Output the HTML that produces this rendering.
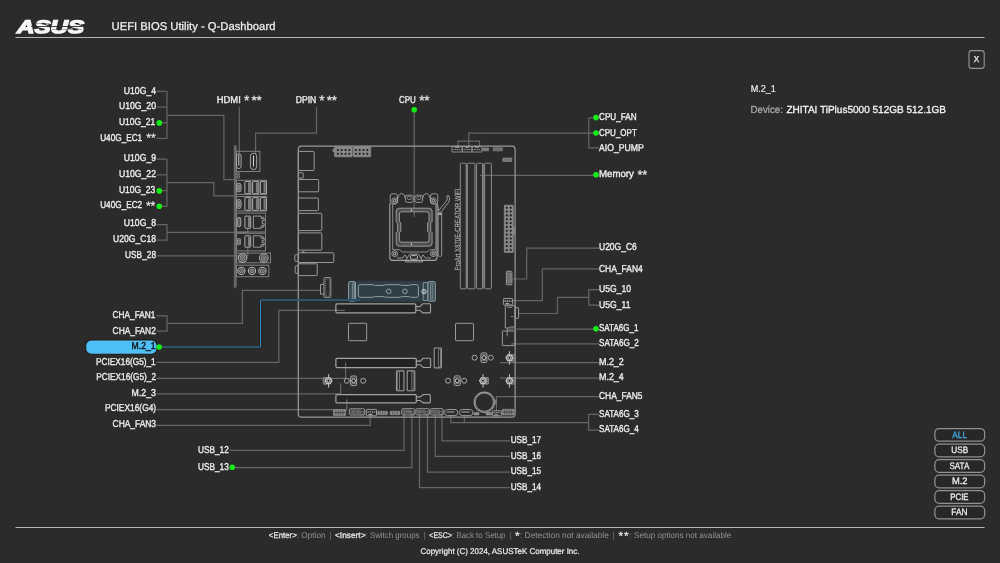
<!DOCTYPE html>
<html lang="en"><head><meta charset="utf-8"><title>UEFI BIOS Utility - Q-Dashboard</title>
<style>html,body{margin:0;padding:0;background:#2b2b2b;overflow:hidden}svg{display:block;will-change:transform;font-family:"Liberation Sans", sans-serif}text{white-space:pre;text-rendering:geometricPrecision}</style>
</head><body>
<svg width="1000" height="563" viewBox="0 0 1000 563">
<rect width="1000" height="563" fill="#2b2b2b"/>
<g id="fills">
<rect x="335.9" y="303.8" width="79.9" height="9.1" rx="1.2" fill="#232323" stroke="none" stroke-width="0" />
<rect x="335.9" y="358.3" width="80.4" height="9.2" rx="1.2" fill="#232323" stroke="none" stroke-width="0" />
<rect x="335.9" y="394.5" width="80.4" height="8.4" rx="1.2" fill="#232323" stroke="none" stroke-width="0" />
</g>
<g id="connectors" transform="translate(0,0.3)">
<polyline points="156.5,91.0 167.0,91.0" fill="none" stroke="#666666" stroke-width="1.2" />
<polyline points="156.5,106.7 167.0,106.7" fill="none" stroke="#666666" stroke-width="1.2" />
<polyline points="156.5,138.1 167.0,138.1" fill="none" stroke="#666666" stroke-width="1.2" />
<polyline points="162.0,122.4 167.0,122.4" fill="none" stroke="#666666" stroke-width="1.2" />
<polyline points="167.0,91.0 167.0,138.1" fill="none" stroke="#666666" stroke-width="1.2" />
<polyline points="167.0,115.0 223.9,115.0 223.9,179.4 236.0,179.4" fill="none" stroke="#666666" stroke-width="1.2" />
<polyline points="156.5,158.9 167.0,158.9" fill="none" stroke="#666666" stroke-width="1.2" />
<polyline points="156.5,174.6 167.0,174.6" fill="none" stroke="#666666" stroke-width="1.2" />
<polyline points="162.0,190.3 167.0,190.3" fill="none" stroke="#666666" stroke-width="1.2" />
<polyline points="162.0,206.0 167.0,206.0" fill="none" stroke="#666666" stroke-width="1.2" />
<polyline points="167.0,158.9 167.0,206.0" fill="none" stroke="#666666" stroke-width="1.2" />
<polyline points="167.0,182.3 213.8,182.3 213.8,195.6 234.4,195.6" fill="none" stroke="#666666" stroke-width="1.2" />
<polyline points="156.5,224.3 167.0,224.3 167.0,239.9 156.5,239.9" fill="none" stroke="#666666" stroke-width="1.2" />
<polyline points="167.0,232.1 247.8,232.1 247.8,228.6" fill="none" stroke="#666666" stroke-width="1.2" />
<polyline points="156.5,255.5 247.8,255.5 247.8,247.2" fill="none" stroke="#666666" stroke-width="1.2" />
<polyline points="156.5,315.5 167.0,315.5 167.0,330.8 156.5,330.8" fill="none" stroke="#666666" stroke-width="1.2" />
<polyline points="167.0,323.1 242.4,323.1 242.4,290.0 320.5,290.0" fill="none" stroke="#666666" stroke-width="1.2" />
<polyline points="156.5,362.0 278.8,362.0 278.8,310.0 345.0,310.0" fill="none" stroke="#666666" stroke-width="1.2" />
<polyline points="156.5,378.0 345.6,378.0 345.6,362.3" fill="none" stroke="#666666" stroke-width="1.2" />
<polyline points="156.5,393.5 340.7,393.5 340.7,383.0" fill="none" stroke="#666666" stroke-width="1.2" />
<polyline points="156.5,409.3 346.8,409.3 346.8,399.0" fill="none" stroke="#666666" stroke-width="1.2" />
<polyline points="156.5,425.0 370.2,425.0 370.2,415.5" fill="none" stroke="#666666" stroke-width="1.2" />
<polyline points="229.5,450.0 404.0,450.0 404.0,413.0" fill="none" stroke="#666666" stroke-width="1.2" />
<polyline points="235.0,467.3 411.9,467.3 411.9,413.0" fill="none" stroke="#666666" stroke-width="1.2" />
<polyline points="239.3,107.0 239.3,154.0" fill="none" stroke="#666666" stroke-width="1.2" />
<polyline points="316.5,107.0 316.5,132.8 255.6,132.8 255.6,153.0" fill="none" stroke="#666666" stroke-width="1.2" />
<polyline points="414.2,112.0 414.2,216.8" fill="none" stroke="#666666" stroke-width="1.2" />
<polyline points="594.0,117.6 588.8,117.6 588.8,147.6 599.0,147.6" fill="none" stroke="#666666" stroke-width="1.2" />
<polyline points="468.8,146.5 468.8,132.8 594.0,132.8" fill="none" stroke="#666666" stroke-width="1.2" />
<polyline points="458.0,146.5 458.0,140.9 479.5,140.9 479.5,146.5" fill="none" stroke="#666666" stroke-width="1.2" />
<polyline points="479.9,175.0 594.0,175.0" fill="none" stroke="#666666" stroke-width="1.2" />
<polyline points="512.2,278.7 526.7,278.7 526.7,247.8 599.0,247.8" fill="none" stroke="#666666" stroke-width="1.2" />
<polyline points="512.6,300.3 542.3,300.3 542.3,268.6 599.0,268.6" fill="none" stroke="#666666" stroke-width="1.2" />
<polyline points="518.7,313.2 557.5,313.2 557.5,297.1 588.8,297.1" fill="none" stroke="#666666" stroke-width="1.2" />
<polyline points="599.0,289.4 588.8,289.4 588.8,304.8 599.0,304.8" fill="none" stroke="#666666" stroke-width="1.2" />
<polyline points="507.6,328.8 594.0,328.8" fill="none" stroke="#666666" stroke-width="1.2" />
<polyline points="511.2,343.5 599.0,343.5" fill="none" stroke="#666666" stroke-width="1.2" />
<polyline points="500.0,362.3 599.0,362.3" fill="none" stroke="#666666" stroke-width="1.2" />
<polyline points="500.0,377.8 599.0,377.8" fill="none" stroke="#666666" stroke-width="1.2" />
<polyline points="496.4,411.0 496.4,396.3 599.0,396.3" fill="none" stroke="#666666" stroke-width="1.2" />
<polyline points="450.8,415.0 450.8,422.3 588.6,422.3" fill="none" stroke="#666666" stroke-width="1.2" />
<polyline points="464.3,415.0 464.3,422.3" fill="none" stroke="#666666" stroke-width="1.2" />
<polyline points="599.0,414.0 588.6,414.0 588.6,429.8 599.0,429.8" fill="none" stroke="#666666" stroke-width="1.2" />
<polyline points="442.0,413.0 442.0,440.5 510.0,440.5" fill="none" stroke="#666666" stroke-width="1.2" />
<polyline points="435.2,413.0 435.2,456.1 510.0,456.1" fill="none" stroke="#666666" stroke-width="1.2" />
<polyline points="427.5,413.0 427.5,471.8 510.0,471.8" fill="none" stroke="#666666" stroke-width="1.2" />
<polyline points="419.5,413.0 419.5,487.4 510.0,487.4" fill="none" stroke="#666666" stroke-width="1.2" />
</g>
<g id="board">
<rect x="234.3" y="145.6" width="1.9" height="141.9" rx="0.9" fill="#626262" stroke="#7c7c7c" stroke-width="0.7" />
<rect x="236.4" y="151.3" width="23.5" height="20.2" rx="0" fill="none" stroke="#808080" stroke-width="1" />
<rect x="236.5" y="153.8" width="4.6" height="14.8" rx="2.3" fill="none" stroke="#a8a8a8" stroke-width="1" />
<polyline points="238.8,155.0 238.8,165.6" fill="none" stroke="#d0d0d0" stroke-width="1" />
<rect x="250.4" y="153.2" width="6.3" height="16.3" rx="3" fill="none" stroke="#a8a8a8" stroke-width="1" />
<polyline points="253.5,155.6 253.5,166.6" fill="none" stroke="#d0d0d0" stroke-width="1.1" />
<circle cx="238.3" cy="173.9" r="1.3" fill="none" stroke="#9a9a9a" stroke-width="0.8"/>
<circle cx="238.3" cy="177.0" r="1.3" fill="none" stroke="#9a9a9a" stroke-width="0.8"/>
<rect x="236.5" y="180.3" width="30.0" height="14.1" rx="0" fill="none" stroke="#808080" stroke-width="1" />
<rect x="236.6" y="183.2" width="4.4" height="8.7" rx="2.1" fill="#4c4c4c" stroke="#a8a8a8" stroke-width="1" />
<rect x="237.9" y="184.7" width="1.8" height="5.7" rx="0.9" fill="#7a7a7a" stroke="#9a9a9a" stroke-width="0.6" />
<rect x="244.9" y="181.4" width="6.0" height="12.3" rx="0.6" fill="none" stroke="#b0b0b0" stroke-width="1" />
<rect x="248.0" y="182.4" width="2.2" height="10.3" rx="0" fill="#7c7c7c" stroke="none" stroke-width="0" />
<rect x="252.7" y="181.4" width="6.1" height="12.3" rx="0.6" fill="none" stroke="#b0b0b0" stroke-width="1" />
<rect x="255.9" y="182.4" width="2.2" height="10.3" rx="0" fill="#7c7c7c" stroke="none" stroke-width="0" />
<rect x="260.4" y="181.4" width="5.9" height="12.3" rx="0.6" fill="none" stroke="#b0b0b0" stroke-width="1" />
<rect x="263.5" y="182.4" width="2.1" height="10.3" rx="0" fill="#7c7c7c" stroke="none" stroke-width="0" />
<rect x="236.5" y="196.5" width="30.0" height="14.5" rx="0" fill="none" stroke="#808080" stroke-width="1" />
<rect x="236.6" y="199.4" width="4.4" height="9.1" rx="2.1" fill="#4c4c4c" stroke="#a8a8a8" stroke-width="1" />
<rect x="237.9" y="200.9" width="1.8" height="6.1" rx="0.9" fill="#7a7a7a" stroke="#9a9a9a" stroke-width="0.6" />
<rect x="244.9" y="197.6" width="6.0" height="12.7" rx="0.6" fill="none" stroke="#b0b0b0" stroke-width="1" />
<rect x="248.0" y="198.6" width="2.2" height="10.7" rx="0" fill="#7c7c7c" stroke="none" stroke-width="0" />
<rect x="252.7" y="197.6" width="6.1" height="12.7" rx="0.6" fill="none" stroke="#b0b0b0" stroke-width="1" />
<rect x="255.9" y="198.6" width="2.2" height="10.7" rx="0" fill="#7c7c7c" stroke="none" stroke-width="0" />
<rect x="260.4" y="197.6" width="5.9" height="12.7" rx="0.6" fill="none" stroke="#b0b0b0" stroke-width="1" />
<rect x="263.5" y="198.6" width="2.1" height="10.7" rx="0" fill="#7c7c7c" stroke="none" stroke-width="0" />
<rect x="236.5" y="213.1" width="29.0" height="18.9" rx="0" fill="none" stroke="#808080" stroke-width="1" />
<rect x="237.2" y="217.4" width="3.6" height="9.4" rx="1.8" fill="#5c5c5c" stroke="#a8a8a8" stroke-width="1" />
<rect x="244.9" y="216.1" width="5.8" height="12.2" rx="0.6" fill="none" stroke="#b0b0b0" stroke-width="1" />
<rect x="247.9" y="217.1" width="2.1" height="10.2" rx="0" fill="#7c7c7c" stroke="none" stroke-width="0" />
<path d="M253.4,216.1 H261.2 V218.6 H264.2 V220.6 H262.2 V223.8 H264.2 V225.8 H261.2 V228.3 H253.4 Z" fill="none" stroke="#9a9a9a" stroke-width="1"/>
<circle cx="263.0" cy="217.5" r="0.8" fill="none" stroke="#9a9a9a" stroke-width="0.6"/>
<circle cx="263.0" cy="226.9" r="0.8" fill="none" stroke="#9a9a9a" stroke-width="0.6"/>
<rect x="236.5" y="233.3" width="29.0" height="17.6" rx="0" fill="none" stroke="#808080" stroke-width="1" />
<rect x="237.4" y="238.6" width="3.0" height="6.1" rx="0.5" fill="#5c5c5c" stroke="#9a9a9a" stroke-width="0.8" />
<polyline points="237.4,240.6 240.4,240.6" fill="none" stroke="#9a9a9a" stroke-width="0.6" />
<polyline points="237.4,242.7 240.4,242.7" fill="none" stroke="#9a9a9a" stroke-width="0.6" />
<rect x="244.9" y="235.8" width="5.8" height="11.4" rx="0.6" fill="none" stroke="#b0b0b0" stroke-width="1" />
<rect x="247.9" y="236.8" width="2.1" height="9.4" rx="0" fill="#7c7c7c" stroke="none" stroke-width="0" />
<path d="M253.4,235.8 H261.2 V238.3 H264.2 V240.3 H262.2 V242.7 H264.2 V244.7 H261.2 V247.2 H253.4 Z" fill="none" stroke="#9a9a9a" stroke-width="1"/>
<circle cx="263.0" cy="237.2" r="0.8" fill="none" stroke="#9a9a9a" stroke-width="0.6"/>
<circle cx="263.0" cy="245.8" r="0.8" fill="none" stroke="#9a9a9a" stroke-width="0.6"/>
<rect x="236.5" y="253.1" width="34.0" height="9.7" rx="0" fill="none" stroke="#808080" stroke-width="1" />
<circle cx="242.5" cy="258.1" r="4.3" fill="none" stroke="#b4b4b4" stroke-width="1.1"/>
<circle cx="242.5" cy="258.1" r="2.6" fill="#585858" stroke="#9a9a9a" stroke-width="0.9"/>
<circle cx="242.5" cy="258.1" r="1" fill="none" stroke="#9a9a9a" stroke-width="0.7"/>
<circle cx="263.8" cy="258.1" r="4.3" fill="none" stroke="#b4b4b4" stroke-width="1.1"/>
<circle cx="263.8" cy="258.1" r="2.6" fill="#585858" stroke="#9a9a9a" stroke-width="0.9"/>
<circle cx="263.8" cy="258.1" r="1" fill="none" stroke="#9a9a9a" stroke-width="0.7"/>
<rect x="236.5" y="265.2" width="32.3" height="11.5" rx="0" fill="none" stroke="#808080" stroke-width="1" />
<circle cx="241.4" cy="270.9" r="3.6" fill="none" stroke="#b4b4b4" stroke-width="1.1"/>
<circle cx="241.4" cy="270.9" r="2" fill="#585858" stroke="#9a9a9a" stroke-width="0.9"/>
<circle cx="241.4" cy="270.9" r="0.7" fill="#222" stroke="#9a9a9a" stroke-width="0.6"/>
<circle cx="252.0" cy="270.9" r="3.6" fill="none" stroke="#b4b4b4" stroke-width="1.1"/>
<circle cx="252.0" cy="270.9" r="2" fill="#585858" stroke="#9a9a9a" stroke-width="0.9"/>
<circle cx="252.0" cy="270.9" r="0.7" fill="#222" stroke="#9a9a9a" stroke-width="0.6"/>
<circle cx="262.4" cy="270.9" r="3.6" fill="none" stroke="#b4b4b4" stroke-width="1.1"/>
<circle cx="262.4" cy="270.9" r="2" fill="#585858" stroke="#9a9a9a" stroke-width="0.9"/>
<circle cx="262.4" cy="270.9" r="0.7" fill="#222" stroke="#9a9a9a" stroke-width="0.6"/>
<rect x="298.3" y="146.1" width="216.8" height="271.0" rx="3.2" fill="none" stroke="#9a9a9a" stroke-width="1.2" />
<rect x="298.3" y="151.4" width="15.9" height="19.1" rx="0.8" fill="none" stroke="#9a9a9a" stroke-width="1" />
<rect x="298.3" y="172.8" width="4.9" height="5.3" rx="0.8" fill="none" stroke="#9a9a9a" stroke-width="1" />
<rect x="298.3" y="179.5" width="20.4" height="12.3" rx="0.8" fill="none" stroke="#9a9a9a" stroke-width="1" />
<rect x="298.3" y="198.0" width="20.1" height="12.6" rx="0.8" fill="none" stroke="#9a9a9a" stroke-width="1" />
<rect x="298.3" y="213.3" width="23.5" height="17.3" rx="0.8" fill="none" stroke="#9a9a9a" stroke-width="1" />
<rect x="298.3" y="232.9" width="23.5" height="17.2" rx="0.8" fill="none" stroke="#9a9a9a" stroke-width="1" />
<rect x="298.3" y="252.8" width="35.5" height="9.7" rx="0.8" fill="none" stroke="#9a9a9a" stroke-width="1" />
<rect x="294.8" y="254.7" width="3.5" height="6.6" rx="1" fill="none" stroke="#9a9a9a" stroke-width="1" />
<polyline points="302.0,252.0 304.5,252.0" fill="none" stroke="#bbb" stroke-width="1" />
<rect x="298.3" y="263.8" width="18.9" height="11.8" rx="0.8" fill="none" stroke="#9a9a9a" stroke-width="1" />
<rect x="295.2" y="265.8" width="3.1" height="7.5" rx="1" fill="none" stroke="#9a9a9a" stroke-width="1" />
<rect x="324.0" y="277.6" width="6.8" height="19.7" rx="0.8" fill="none" stroke="#9a9a9a" stroke-width="1" />
<rect x="325.6" y="279.0" width="3.8" height="17.0" rx="0.5" fill="none" stroke="#9a9a9a" stroke-width="0.7" stroke-dasharray="1.2 1"/>
<polyline points="324.0,284.4 320.5,284.4 320.5,294.1 324.0,294.1" fill="none" stroke="#9a9a9a" stroke-width="1" />
<rect x="334.6" y="146.9" width="17.6" height="9.9" rx="0.6" fill="#858585" stroke="#9a9a9a" stroke-width="0.6" />
<circle cx="337.9" cy="150.0" r="1.0" fill="#1b1b1b"/>
<circle cx="337.9" cy="153.7" r="1.0" fill="#1b1b1b"/>
<circle cx="341.7" cy="150.0" r="1.0" fill="#1b1b1b"/>
<circle cx="341.7" cy="153.7" r="1.0" fill="#1b1b1b"/>
<circle cx="345.5" cy="150.0" r="1.0" fill="#1b1b1b"/>
<circle cx="345.5" cy="153.7" r="1.0" fill="#1b1b1b"/>
<circle cx="349.3" cy="150.0" r="1.0" fill="#1b1b1b"/>
<circle cx="349.3" cy="153.7" r="1.0" fill="#1b1b1b"/>
<rect x="333.0" y="149.1" width="1.6" height="2.6" rx="0.3" fill="#858585" stroke="#9a9a9a" stroke-width="0.6" />
<rect x="353.4" y="146.9" width="17.3" height="9.9" rx="0.6" fill="#858585" stroke="#9a9a9a" stroke-width="0.6" />
<circle cx="355.9" cy="150.0" r="1.0" fill="#1b1b1b"/>
<circle cx="355.9" cy="153.7" r="1.0" fill="#1b1b1b"/>
<circle cx="359.7" cy="150.0" r="1.0" fill="#1b1b1b"/>
<circle cx="359.7" cy="153.7" r="1.0" fill="#1b1b1b"/>
<circle cx="363.5" cy="150.0" r="1.0" fill="#1b1b1b"/>
<circle cx="363.5" cy="153.7" r="1.0" fill="#1b1b1b"/>
<circle cx="367.3" cy="150.0" r="1.0" fill="#1b1b1b"/>
<circle cx="367.3" cy="153.7" r="1.0" fill="#1b1b1b"/>
<rect x="452.0" y="146.6" width="10.2" height="5.4" rx="0.5" fill="none" stroke="#9a9a9a" stroke-width="0.9" />
<polyline points="453.5,149.5 460.7,149.5" fill="none" stroke="#b0b0b0" stroke-width="1" stroke-dasharray="1 0.8"/>
<polyline points="455.0,147.4 459.2,147.4" fill="none" stroke="#b0b0b0" stroke-width="0.8" />
<rect x="462.2" y="146.6" width="9.8" height="5.4" rx="0.5" fill="none" stroke="#9a9a9a" stroke-width="0.9" />
<polyline points="463.7,149.5 470.5,149.5" fill="none" stroke="#b0b0b0" stroke-width="1" stroke-dasharray="1 0.8"/>
<polyline points="465.2,147.4 469.0,147.4" fill="none" stroke="#b0b0b0" stroke-width="0.8" />
<rect x="472.0" y="146.6" width="9.9" height="5.4" rx="0.5" fill="none" stroke="#9a9a9a" stroke-width="0.9" />
<polyline points="473.5,149.5 480.4,149.5" fill="none" stroke="#b0b0b0" stroke-width="1" stroke-dasharray="1 0.8"/>
<polyline points="475.0,147.4 478.9,147.4" fill="none" stroke="#b0b0b0" stroke-width="0.8" />
<rect x="482.6" y="148.0" width="6.0" height="2.8" rx="0.3" fill="#777" stroke="#9a9a9a" stroke-width="0.6" />
<rect x="493.2" y="147.8" width="9.2" height="3.0" rx="0.3" fill="#666" stroke="#9a9a9a" stroke-width="0.6" />
<rect x="502.8" y="158.0" width="9.0" height="3.5" rx="0.3" fill="#555" stroke="#9a9a9a" stroke-width="0.6" />
<rect x="503.4" y="158.5" width="1.4" height="2.5" rx="0.3" fill="none" stroke="#9a9a9a" stroke-width="0.5" />
<rect x="505.5" y="158.5" width="1.4" height="2.5" rx="0.3" fill="none" stroke="#9a9a9a" stroke-width="0.5" />
<rect x="507.7" y="158.5" width="1.4" height="2.5" rx="0.3" fill="none" stroke="#9a9a9a" stroke-width="0.5" />
<rect x="509.8" y="158.5" width="1.4" height="2.5" rx="0.3" fill="none" stroke="#9a9a9a" stroke-width="0.5" />
<rect x="466.2" y="163.6" width="1.1" height="125.0" rx="0" fill="#6a6a6a" stroke="none" stroke-width="0" />
<rect x="482.5" y="163.6" width="2.1" height="125.0" rx="0" fill="#6a6a6a" stroke="none" stroke-width="0" />
<rect x="460.3" y="163.2" width="5.9" height="125.6" rx="1" fill="none" stroke="#8c8c8c" stroke-width="1" />
<rect x="467.3" y="163.2" width="7.6" height="125.6" rx="1" fill="none" stroke="#8c8c8c" stroke-width="1" />
<rect x="476.5" y="163.2" width="6.0" height="125.6" rx="1" fill="none" stroke="#8c8c8c" stroke-width="1" />
<rect x="484.6" y="163.2" width="6.8" height="125.6" rx="1" fill="none" stroke="#8c8c8c" stroke-width="1" />
<rect x="504.3" y="205.2" width="9.0" height="47.2" rx="0.6" fill="#858585" stroke="#9a9a9a" stroke-width="0.6" />
<circle cx="506.8" cy="207.7" r="1.05" fill="#1b1b1b"/>
<circle cx="506.8" cy="211.5" r="1.05" fill="#1b1b1b"/>
<circle cx="506.8" cy="215.4" r="1.05" fill="#1b1b1b"/>
<circle cx="506.8" cy="219.2" r="1.05" fill="#1b1b1b"/>
<circle cx="506.8" cy="223.1" r="1.05" fill="#1b1b1b"/>
<circle cx="506.8" cy="226.9" r="1.05" fill="#1b1b1b"/>
<circle cx="506.8" cy="230.8" r="1.05" fill="#1b1b1b"/>
<circle cx="506.8" cy="234.6" r="1.05" fill="#1b1b1b"/>
<circle cx="506.8" cy="238.5" r="1.05" fill="#1b1b1b"/>
<circle cx="506.8" cy="242.3" r="1.05" fill="#1b1b1b"/>
<circle cx="506.8" cy="246.1" r="1.05" fill="#1b1b1b"/>
<circle cx="506.8" cy="250.0" r="1.05" fill="#1b1b1b"/>
<circle cx="510.7" cy="207.7" r="1.05" fill="#1b1b1b"/>
<circle cx="510.7" cy="211.5" r="1.05" fill="#1b1b1b"/>
<circle cx="510.7" cy="215.4" r="1.05" fill="#1b1b1b"/>
<circle cx="510.7" cy="219.2" r="1.05" fill="#1b1b1b"/>
<circle cx="510.7" cy="223.1" r="1.05" fill="#1b1b1b"/>
<circle cx="510.7" cy="226.9" r="1.05" fill="#1b1b1b"/>
<circle cx="510.7" cy="230.8" r="1.05" fill="#1b1b1b"/>
<circle cx="510.7" cy="234.6" r="1.05" fill="#1b1b1b"/>
<circle cx="510.7" cy="238.5" r="1.05" fill="#1b1b1b"/>
<circle cx="510.7" cy="242.3" r="1.05" fill="#1b1b1b"/>
<circle cx="510.7" cy="246.1" r="1.05" fill="#1b1b1b"/>
<circle cx="510.7" cy="250.0" r="1.05" fill="#1b1b1b"/>
<rect x="513.3" y="226.8" width="1.4" height="7.6" rx="0.3" fill="#6a6a6a" stroke="#9a9a9a" stroke-width="0.7" />
<rect x="506.4" y="271.3" width="5.5" height="13.5" rx="0.6" fill="#4a4a4a" stroke="#9a9a9a" stroke-width="1" />
<rect x="507.8" y="273.0" width="2.7" height="10.0" rx="0.4" fill="#6a6a6a" stroke="#9a9a9a" stroke-width="0.6" />
<rect x="503.4" y="298.5" width="9.2" height="6.4" rx="0.6" fill="none" stroke="#9a9a9a" stroke-width="1" />
<polyline points="504.5,301.2 511.5,301.2" fill="none" stroke="#c8c8c8" stroke-width="1.2" stroke-dasharray="1.4 0.7"/>
<polyline points="505.5,303.6 509.0,303.6" fill="none" stroke="#c8c8c8" stroke-width="0.9" />
<path d="M505.3,305.8 H515.1 V327 H510 L508.6,328 H505.3 Z" fill="none" stroke="#9a9a9a" stroke-width="1"/>
<path d="M507.6,307.5 H512" fill="none" stroke="#9a9a9a" stroke-width="0.7"/>
<rect x="515.1" y="307.7" width="3.5" height="10.7" rx="0.6" fill="none" stroke="#9a9a9a" stroke-width="1" />
<polyline points="511.0,316.5 513.5,316.5" fill="none" stroke="#9a9a9a" stroke-width="0.8" />
<rect x="502.4" y="331.0" width="12.7" height="14.6" rx="0.6" fill="none" stroke="#9a9a9a" stroke-width="1" />
<polyline points="507.2,328.4 507.2,336.2" fill="none" stroke="#9a9a9a" stroke-width="0.9" />
<path d="M389.8,203.5 V257.5 Q389.8,260.4 392.6,260.4 H434 Q437,260.4 437,257.5 V203.5" fill="none" stroke="#a4a4a4" stroke-width="1.1"/>
<path d="M392.7,204 V249.6 H399 L402.6,252 H427 L430.4,249.6 H435.9 V204" fill="none" stroke="#a4a4a4" stroke-width="0.8"/>
<rect x="390.2" y="193.8" width="7.2" height="10.2" rx="2.2" fill="none" stroke="#a4a4a4" stroke-width="0.9" />
<rect x="430.6" y="193.8" width="7.2" height="10.2" rx="2.2" fill="none" stroke="#a4a4a4" stroke-width="0.9" />
<path d="M397.4,201.5 Q398,194 401.5,193.4 Q405,194 405.4,198" fill="none" stroke="#a4a4a4" stroke-width="0.9"/>
<path d="M430.6,201.5 Q430,194 426.5,193.4 Q423,194 422.6,198" fill="none" stroke="#a4a4a4" stroke-width="0.9"/>
<rect x="405.4" y="195.2" width="7.8" height="7.2" rx="2" fill="none" stroke="#a4a4a4" stroke-width="0.9" />
<rect x="414.9" y="195.2" width="7.7" height="7.2" rx="2" fill="none" stroke="#a4a4a4" stroke-width="0.9" />
<rect x="407.4" y="196.4" width="3.8" height="3.0" rx="0.8" fill="none" stroke="#a4a4a4" stroke-width="0.7" />
<rect x="416.9" y="196.4" width="3.8" height="3.0" rx="0.8" fill="none" stroke="#a4a4a4" stroke-width="0.7" />
<path d="M397,258 H402.6 L404.9,254.9 L407,258.2 M431,258 H425.4 L423.1,254.9 L421,258.2" fill="none" stroke="#a4a4a4" stroke-width="0.9"/>
<path d="M405.5,260.6 L409.3,254.6 Q409.7,254.2 410.4,254.2 H417.6 Q418.3,254.2 418.7,254.6 L422.5,260.6 V261.9 H405.5 Z" fill="none" stroke="#a4a4a4" stroke-width="0.9"/>
<rect x="410.4" y="255.6" width="7.2" height="3.6" rx="1.2" fill="none" stroke="#c4c4c4" stroke-width="0.9" />
<circle cx="394.7" cy="200.7" r="2.9" fill="none" stroke="#a4a4a4" stroke-width="0.9"/>
<circle cx="394.7" cy="200.7" r="1.3" fill="none" stroke="#cfcfcf" stroke-width="0.9"/>
<circle cx="433.3" cy="200.7" r="2.9" fill="none" stroke="#a4a4a4" stroke-width="0.9"/>
<circle cx="433.3" cy="200.7" r="1.3" fill="none" stroke="#cfcfcf" stroke-width="0.9"/>
<circle cx="394.7" cy="253.7" r="2.9" fill="none" stroke="#a4a4a4" stroke-width="0.9"/>
<circle cx="394.7" cy="253.7" r="1.3" fill="none" stroke="#cfcfcf" stroke-width="0.9"/>
<circle cx="433.3" cy="253.7" r="2.9" fill="none" stroke="#a4a4a4" stroke-width="0.9"/>
<circle cx="433.3" cy="253.7" r="1.3" fill="none" stroke="#cfcfcf" stroke-width="0.9"/>
<path d="M399.2,208.2 H429.1 Q432.1,208.2 432.1,211.2 V221.7 L430.7,223.2 V231.2 L432.1,232.7 V243.2 Q432.1,246.2 429.1,246.2 H399.2 Q396.2,246.2 396.2,243.2 V232.7 L397.6,231.2 V223.2 L396.2,221.7 V211.2 Q396.2,208.2 399.2,208.2 Z M401.6,211.8 H426.8 Q429.0,211.8 429.0,214.0 V221.5 L427.6,223.0 V231.0 L429.0,232.5 V240.0 Q429.0,242.2 426.8,242.2 H401.6 Q399.4,242.2 399.4,240.0 V232.5 L400.8,231.0 V223.0 L399.4,221.5 V214.0 Q399.4,211.8 401.6,211.8 Z" fill="#505050" fill-rule="evenodd" stroke="#a4a4a4" stroke-width="0.9" stroke-linejoin="round"/>
<rect x="410.8" y="209.4" width="1.2" height="1.4" rx="0" fill="#e4e4e4" stroke="#e4e4e4" stroke-width="0" />
<rect x="410.8" y="243.6" width="1.2" height="1.4" rx="0" fill="#e4e4e4" stroke="#e4e4e4" stroke-width="0" />
<rect x="438.1" y="213.4" width="3.6" height="43.0" rx="1.4" fill="none" stroke="#a4a4a4" stroke-width="0.9" />
<ellipse cx="439.9" cy="213.6" rx="1.9" ry="1" fill="none" stroke="#c8c8c8" stroke-width="0.9"/>
<path d="M437.6,204.6 L438.8,211.6 M438.8,210.4 L446.4,201.2 Q448.4,198.6 446.6,196.2 M441.2,211.8 L448.6,202.4 Q450.9,199 448.5,195.4 L446.6,196.2" fill="none" stroke="#a4a4a4" stroke-width="0.9"/>
<text transform="translate(459.9,270.6) rotate(-90)" textLength="82" lengthAdjust="spacingAndGlyphs" font-size="7.6" fill="#c4c4c4">ProArt X870E-CREATOR WIFI</text>
<rect x="348.3" y="281.2" width="87.2" height="20.4" rx="0.5" fill="#2f3e46" stroke="#2f3e46" stroke-width="0.6" />
<rect x="348.6" y="281.6" width="6.9" height="19.4" rx="1.5" fill="#394951" stroke="#9aabb3" stroke-width="0.9" />
<rect x="352.3" y="283.0" width="2.3" height="16.4" rx="0.8" fill="#56666e" stroke="#9aabb3" stroke-width="0.6" />
<path d="M360,284.7 H372 Q373,284.7 373.8,285.05 T375.6,285.4 H383 Q384,285.4 384.8,285.05 T386.6,284.7 H399 Q400,284.7 400.8,285.05 T402.6,285.4 H408 Q409,285.4 409.8,285.05 T411.6,284.7 H416.5 Q418.4,284.7 418.4,286.6 V295.4 Q418.4,297.3 416.5,297.3 H411.6 Q410.6,297.3 409.8,296.95 T408,296.6 H402.6 Q401.6,296.6 400.8,296.95 T399,297.3 H386.6 Q385.6,297.3 384.8,296.95 T383,296.6 H375.6 Q374.6,296.6 373.8,296.95 T372,297.3 H360 Q358.4,297.3 358.4,295.4 V286.6 Q358.4,284.7 360,284.7 Z" fill="none" stroke="#9aabb3" stroke-width="0.9"/>
<circle cx="388.7" cy="291.3" r="2.3" fill="none" stroke="#9aabb3" stroke-width="0.9"/>
<circle cx="404.9" cy="291.3" r="2.3" fill="none" stroke="#9aabb3" stroke-width="0.9"/>
<rect x="423.2" y="282.6" width="4.8" height="17.8" rx="0.6" fill="#34444c" stroke="#9aabb3" stroke-width="0.8" />
<rect x="428.0" y="281.6" width="7.3" height="19.6" rx="1.5" fill="#394951" stroke="#9aabb3" stroke-width="0.9" />
<rect x="430.6" y="283.0" width="2.2" height="16.6" rx="0.6" fill="#4c5c64" stroke="#9aabb3" stroke-width="0.6" />
<circle cx="424.0" cy="291.6" r="2.2" fill="none" stroke="#c8d4da" stroke-width="1"/>
<circle cx="424.0" cy="291.6" r="0.8" fill="none" stroke="#c8d4da" stroke-width="0.6"/>
<rect x="335.9" y="303.8" width="79.9" height="9.1" rx="1.2" fill="none" stroke="#a2a2a2" stroke-width="1.25" />
<path d="M415.8,306.6 H419.8 L422.8,303.8 H429.5 Q430.5,303.8 430.5,304.8 V311.9 Q430.5,312.9 429.5,312.9 H422.8 L419.8,310.2 H415.8" fill="none" stroke="#a2a2a2" stroke-width="1.1"/>
<rect x="335.9" y="358.3" width="80.4" height="9.2" rx="1.2" fill="none" stroke="#a2a2a2" stroke-width="1.25" />
<path d="M416.3,361.1 H420.3 L423.3,358.3 H429.6 Q430.6,358.3 430.6,359.3 V366.5 Q430.6,367.5 429.6,367.5 H423.3 L420.3,364.7 H416.3" fill="none" stroke="#a2a2a2" stroke-width="1.1"/>
<rect x="335.9" y="394.5" width="80.4" height="8.4" rx="1.2" fill="none" stroke="#a2a2a2" stroke-width="1.25" />
<path d="M416.3,396.9 H420.3 L423.3,394.5 H429.3 Q430.3,394.5 430.3,395.5 V401.9 Q430.3,402.9 429.3,402.9 H423.3 L420.3,400.5 H416.3" fill="none" stroke="#a2a2a2" stroke-width="1.1"/>
<rect x="348.5" y="323.3" width="18.2" height="17.4" rx="0.8" fill="none" stroke="#9a9a9a" stroke-width="1" />
<rect x="455.5" y="323.3" width="18.0" height="17.4" rx="0.8" fill="none" stroke="#9a9a9a" stroke-width="1" />
<rect x="434.2" y="348.0" width="7.2" height="19.9" rx="0.8" fill="#252525" stroke="#9a9a9a" stroke-width="1.1" />
<rect x="438.4" y="349.0" width="2.1" height="17.9" rx="0.8" fill="none" stroke="#9a9a9a" stroke-width="0.7" />
<rect x="396.5" y="370.9" width="7.4" height="19.9" rx="0.8" fill="#252525" stroke="#9a9a9a" stroke-width="1.1" />
<rect x="397.4" y="371.9" width="2.1" height="17.9" rx="0.8" fill="none" stroke="#9a9a9a" stroke-width="0.7" />
<rect x="407.2" y="370.9" width="7.6" height="19.9" rx="0.8" fill="#252525" stroke="#9a9a9a" stroke-width="1.1" />
<rect x="411.8" y="371.9" width="2.1" height="17.9" rx="0.8" fill="none" stroke="#9a9a9a" stroke-width="0.7" />
<circle cx="474.6" cy="357.7" r="2.5" fill="none" stroke="#b4b4b4" stroke-width="0.9"/>
<circle cx="490.8" cy="357.7" r="2.5" fill="none" stroke="#b4b4b4" stroke-width="0.9"/>
<rect x="480.9" y="352.9" width="6.0" height="9.6" rx="1.4" fill="none" stroke="#b4b4b4" stroke-width="0.9" />
<polyline points="481.5,354.8 486.3,354.8" fill="none" stroke="#b4b4b4" stroke-width="0.6" />
<polyline points="481.5,360.6 486.3,360.6" fill="none" stroke="#b4b4b4" stroke-width="0.6" />
<circle cx="483.9" cy="357.7" r="1.9" fill="#1e1e1e" stroke="#d0d0d0" stroke-width="1"/>
<rect x="511.0" y="354.7" width="3.8" height="6.5" rx="0.4" fill="#3c3c3c" stroke="#a0a0a0" stroke-width="0.8" />
<polyline points="511.9,355.0 511.9,360.9" fill="none" stroke="#a0a0a0" stroke-width="0.45" />
<polyline points="512.9,355.0 512.9,360.9" fill="none" stroke="#a0a0a0" stroke-width="0.45" />
<polyline points="513.9,355.0 513.9,360.9" fill="none" stroke="#a0a0a0" stroke-width="0.45" />
<polyline points="509.4,351.2 509.4,364.6" fill="none" stroke="#c6c6c6" stroke-width="1" />
<polygon points="512.8,357.8 511.1,360.7 507.7,360.7 506.0,357.8 507.7,354.9 511.1,354.9" fill="#6a6a6a" stroke="#c6c6c6" stroke-width="1.2" stroke-linejoin="round"/>
<circle cx="509.4" cy="357.8" r="1.4" fill="#222" stroke="#e0e0e0" stroke-width="0.7"/>
<circle cx="448.0" cy="380.7" r="2.5" fill="none" stroke="#b4b4b4" stroke-width="0.9"/>
<circle cx="464.2" cy="380.7" r="2.5" fill="none" stroke="#b4b4b4" stroke-width="0.9"/>
<rect x="454.2" y="375.9" width="6.0" height="9.6" rx="1.4" fill="none" stroke="#b4b4b4" stroke-width="0.9" />
<polyline points="454.8,377.8 459.6,377.8" fill="none" stroke="#b4b4b4" stroke-width="0.6" />
<polyline points="454.8,383.6 459.6,383.6" fill="none" stroke="#b4b4b4" stroke-width="0.6" />
<circle cx="457.2" cy="380.7" r="1.9" fill="#1e1e1e" stroke="#d0d0d0" stroke-width="1"/>
<rect x="484.6" y="377.6" width="3.8" height="6.5" rx="0.4" fill="#3c3c3c" stroke="#a0a0a0" stroke-width="0.8" />
<polyline points="485.6,377.9 485.6,383.8" fill="none" stroke="#a0a0a0" stroke-width="0.45" />
<polyline points="486.5,377.9 486.5,383.8" fill="none" stroke="#a0a0a0" stroke-width="0.45" />
<polyline points="487.5,377.9 487.5,383.8" fill="none" stroke="#a0a0a0" stroke-width="0.45" />
<polyline points="483.0,374.1 483.0,387.5" fill="none" stroke="#c6c6c6" stroke-width="1" />
<polygon points="486.4,380.7 484.7,383.6 481.3,383.6 479.6,380.7 481.3,377.8 484.7,377.8" fill="#6a6a6a" stroke="#c6c6c6" stroke-width="1.2" stroke-linejoin="round"/>
<circle cx="483.0" cy="380.7" r="1.4" fill="#222" stroke="#e0e0e0" stroke-width="0.7"/>
<rect x="511.0" y="377.6" width="3.8" height="6.5" rx="0.4" fill="#3c3c3c" stroke="#a0a0a0" stroke-width="0.8" />
<polyline points="511.9,377.9 511.9,383.8" fill="none" stroke="#a0a0a0" stroke-width="0.45" />
<polyline points="512.9,377.9 512.9,383.8" fill="none" stroke="#a0a0a0" stroke-width="0.45" />
<polyline points="513.9,377.9 513.9,383.8" fill="none" stroke="#a0a0a0" stroke-width="0.45" />
<polyline points="509.4,374.1 509.4,387.5" fill="none" stroke="#c6c6c6" stroke-width="1" />
<polygon points="512.8,380.7 511.1,383.6 507.7,383.6 506.0,380.7 507.7,377.8 511.1,377.8" fill="#6a6a6a" stroke="#c6c6c6" stroke-width="1.2" stroke-linejoin="round"/>
<circle cx="509.4" cy="380.7" r="1.4" fill="#222" stroke="#e0e0e0" stroke-width="0.7"/>
<circle cx="346.8" cy="380.8" r="2.5" fill="none" stroke="#b4b4b4" stroke-width="0.9"/>
<circle cx="363.2" cy="380.8" r="2.5" fill="none" stroke="#b4b4b4" stroke-width="0.9"/>
<rect x="350.6" y="376.0" width="6.0" height="9.6" rx="1.4" fill="none" stroke="#b4b4b4" stroke-width="0.9" />
<polyline points="351.2,377.9 356.0,377.9" fill="none" stroke="#b4b4b4" stroke-width="0.6" />
<polyline points="351.2,383.7 356.0,383.7" fill="none" stroke="#b4b4b4" stroke-width="0.6" />
<circle cx="353.6" cy="380.8" r="1.9" fill="#1e1e1e" stroke="#d0d0d0" stroke-width="1"/>
<rect x="323.2" y="377.7" width="3.8" height="6.5" rx="0.4" fill="#3c3c3c" stroke="#a0a0a0" stroke-width="0.8" />
<polyline points="324.2,378.0 324.2,383.9" fill="none" stroke="#a0a0a0" stroke-width="0.45" />
<polyline points="325.1,378.0 325.1,383.9" fill="none" stroke="#a0a0a0" stroke-width="0.45" />
<polyline points="326.1,378.0 326.1,383.9" fill="none" stroke="#a0a0a0" stroke-width="0.45" />
<polyline points="328.6,374.2 328.6,387.6" fill="none" stroke="#c6c6c6" stroke-width="1" />
<polygon points="332.0,380.8 330.3,383.7 326.9,383.7 325.2,380.8 326.9,377.9 330.3,377.9" fill="#6a6a6a" stroke="#c6c6c6" stroke-width="1.2" stroke-linejoin="round"/>
<circle cx="328.6" cy="380.8" r="1.4" fill="#222" stroke="#e0e0e0" stroke-width="0.7"/>
<circle cx="484.3" cy="402.2" r="10.1" fill="none" stroke="#9a9a9a" stroke-width="1.2"/>
<circle cx="484.3" cy="402.2" r="9" fill="none" stroke="#9a9a9a" stroke-width="0.8"/>
<path d="M494,399.4 L495.9,400.6 V403.4 L494,404.4" fill="none" stroke="#9a9a9a" stroke-width="0.9"/>
<rect x="333.5" y="409.8" width="12.1" height="5.7" rx="0.4" fill="#8c8c8c" stroke="#9a9a9a" stroke-width="0.6" />
<polyline points="334.0,412.6 345.0,412.6" fill="none" stroke="#2b2b2b" stroke-width="0.7" />
<polyline points="335.9,410.0 335.9,415.4" fill="none" stroke="#2b2b2b" stroke-width="0.5" />
<polyline points="338.3,410.0 338.3,415.4" fill="none" stroke="#2b2b2b" stroke-width="0.5" />
<polyline points="340.7,410.0 340.7,415.4" fill="none" stroke="#2b2b2b" stroke-width="0.5" />
<polyline points="343.1,410.0 343.1,415.4" fill="none" stroke="#2b2b2b" stroke-width="0.5" />
<rect x="349.3" y="408.8" width="15.4" height="6.2" rx="1.2" fill="none" stroke="#9a9a9a" stroke-width="1" />
<rect x="351.0" y="410.2" width="1.4" height="3.4" rx="0.2" fill="none" stroke="#9a9a9a" stroke-width="0.6" />
<rect x="353.5" y="410.2" width="1.4" height="3.4" rx="0.2" fill="none" stroke="#9a9a9a" stroke-width="0.6" />
<rect x="356.0" y="410.2" width="1.4" height="3.4" rx="0.2" fill="none" stroke="#9a9a9a" stroke-width="0.6" />
<rect x="358.5" y="410.2" width="1.4" height="3.4" rx="0.2" fill="none" stroke="#9a9a9a" stroke-width="0.6" />
<rect x="360.6" y="411.5" width="2.8" height="2.9" rx="0.2" fill="none" stroke="#9a9a9a" stroke-width="0.6" />
<rect x="366.3" y="409.4" width="10.2" height="6.4" rx="0.6" fill="none" stroke="#9a9a9a" stroke-width="1" />
<polyline points="367.5,412.0 375.3,412.0" fill="none" stroke="#c8c8c8" stroke-width="1.2" stroke-dasharray="1.4 0.7"/>
<polyline points="368.5,414.4 372.5,414.4" fill="none" stroke="#c8c8c8" stroke-width="0.9" />
<rect x="377.8" y="411.3" width="9.6" height="3.4" rx="0.3" fill="#8c8c8c" stroke="#9a9a9a" stroke-width="0.6" />
<polyline points="380.2,411.5 380.2,414.5" fill="none" stroke="#2b2b2b" stroke-width="0.5" />
<polyline points="382.6,411.5 382.6,414.5" fill="none" stroke="#2b2b2b" stroke-width="0.5" />
<polyline points="385.0,411.5 385.0,414.5" fill="none" stroke="#2b2b2b" stroke-width="0.5" />
<rect x="390.2" y="411.3" width="9.6" height="3.4" rx="0.3" fill="#8c8c8c" stroke="#9a9a9a" stroke-width="0.6" />
<polyline points="392.6,411.5 392.6,414.5" fill="none" stroke="#2b2b2b" stroke-width="0.5" />
<polyline points="395.0,411.5 395.0,414.5" fill="none" stroke="#2b2b2b" stroke-width="0.5" />
<polyline points="397.4,411.5 397.4,414.5" fill="none" stroke="#2b2b2b" stroke-width="0.5" />
<rect x="401.8" y="408.7" width="13.1" height="6.3" rx="1.2" fill="none" stroke="#9a9a9a" stroke-width="1" />
<rect x="403.2" y="410.0" width="1.2" height="3.4" rx="0.2" fill="none" stroke="#9a9a9a" stroke-width="0.55" />
<rect x="405.3" y="410.0" width="1.2" height="3.4" rx="0.2" fill="none" stroke="#9a9a9a" stroke-width="0.55" />
<rect x="407.4" y="410.0" width="1.2" height="3.4" rx="0.2" fill="none" stroke="#9a9a9a" stroke-width="0.55" />
<rect x="409.5" y="410.0" width="1.2" height="3.4" rx="0.2" fill="none" stroke="#9a9a9a" stroke-width="0.55" />
<rect x="410.9" y="411.3" width="2.8" height="3.0" rx="0.2" fill="none" stroke="#9a9a9a" stroke-width="0.6" />
<rect x="416.0" y="408.7" width="13.2" height="6.3" rx="1.2" fill="none" stroke="#9a9a9a" stroke-width="1" />
<rect x="417.4" y="410.0" width="1.2" height="3.4" rx="0.2" fill="none" stroke="#9a9a9a" stroke-width="0.55" />
<rect x="419.5" y="410.0" width="1.2" height="3.4" rx="0.2" fill="none" stroke="#9a9a9a" stroke-width="0.55" />
<rect x="421.6" y="410.0" width="1.2" height="3.4" rx="0.2" fill="none" stroke="#9a9a9a" stroke-width="0.55" />
<rect x="423.7" y="410.0" width="1.2" height="3.4" rx="0.2" fill="none" stroke="#9a9a9a" stroke-width="0.55" />
<rect x="425.2" y="411.3" width="2.8" height="3.0" rx="0.2" fill="none" stroke="#9a9a9a" stroke-width="0.6" />
<rect x="430.1" y="408.7" width="13.1" height="6.3" rx="1.2" fill="none" stroke="#9a9a9a" stroke-width="1" />
<rect x="431.5" y="410.0" width="1.2" height="3.4" rx="0.2" fill="none" stroke="#9a9a9a" stroke-width="0.55" />
<rect x="433.6" y="410.0" width="1.2" height="3.4" rx="0.2" fill="none" stroke="#9a9a9a" stroke-width="0.55" />
<rect x="435.7" y="410.0" width="1.2" height="3.4" rx="0.2" fill="none" stroke="#9a9a9a" stroke-width="0.55" />
<rect x="437.8" y="410.0" width="1.2" height="3.4" rx="0.2" fill="none" stroke="#9a9a9a" stroke-width="0.55" />
<rect x="439.2" y="411.3" width="2.8" height="3.0" rx="0.2" fill="none" stroke="#9a9a9a" stroke-width="0.6" />
<rect x="444.5" y="409.5" width="13.4" height="6.1" rx="3" fill="none" stroke="#9a9a9a" stroke-width="1" />
<polyline points="446.7,412.0 454.4,412.0" fill="none" stroke="#c0c0c0" stroke-width="0.9" />
<rect x="459.3" y="409.5" width="13.6" height="6.1" rx="3" fill="none" stroke="#9a9a9a" stroke-width="1" />
<polyline points="461.5,412.0 469.4,412.0" fill="none" stroke="#c0c0c0" stroke-width="0.9" />
<rect x="473.9" y="412.5" width="5.1" height="2.5" rx="0.3" fill="#8c8c8c" stroke="#9a9a9a" stroke-width="0.5" />
<rect x="486.0" y="412.5" width="5.8" height="2.5" rx="0.3" fill="#8c8c8c" stroke="#9a9a9a" stroke-width="0.5" />
<rect x="492.4" y="410.8" width="9.0" height="5.0" rx="0.6" fill="none" stroke="#9a9a9a" stroke-width="1" />
<polyline points="493.5,412.8 500.3,412.8" fill="none" stroke="#c8c8c8" stroke-width="1.1" stroke-dasharray="1.3 0.7"/>
<polyline points="494.5,414.8 498.0,414.8" fill="none" stroke="#c8c8c8" stroke-width="0.8" />
<rect x="502.2" y="409.3" width="11.8" height="5.7" rx="0.6" fill="#8c8c8c" stroke="#9a9a9a" stroke-width="0.6" />
<polyline points="502.6,412.1 513.6,412.1" fill="none" stroke="#2b2b2b" stroke-width="0.7" />
<polyline points="504.6,409.6 504.6,414.8" fill="none" stroke="#2b2b2b" stroke-width="0.5" />
<polyline points="506.9,409.6 506.9,414.8" fill="none" stroke="#2b2b2b" stroke-width="0.5" />
<polyline points="509.3,409.6 509.3,414.8" fill="none" stroke="#2b2b2b" stroke-width="0.5" />
<polyline points="511.6,409.6 511.6,414.8" fill="none" stroke="#2b2b2b" stroke-width="0.5" />
</g>
<g id="blue">
<polyline points="162.0,347.0 260.5,347.0 260.5,300.0 360.3,300.0" fill="none" stroke="#211712" stroke-width="2.2" />
<polyline points="162.0,347.0 260.5,347.0 260.5,300.0 360.3,300.0" fill="none" stroke="#3791c8" stroke-width="1.0" />
</g>
<g id="header">
<polyline points="15.5,37.5 984.6,37.5" fill="none" stroke="#b4b4b4" stroke-width="1.1" />
<text x="17" y="33" textLength="67" lengthAdjust="spacingAndGlyphs" font-size="18.2" font-weight="bold" font-style="italic" fill="#f6f6f6" stroke="#f6f6f6" stroke-width="1.3" stroke-linejoin="miter">ASUS</text>
<rect x="31" y="26.1" width="51" height="0.9" fill="#2b2b2b"/>
<rect x="34" y="23.2" width="16" height="0.6" fill="#2b2b2b" opacity="0.6"/>
<rect x="52" y="29.3" width="30" height="0.6" fill="#2b2b2b" opacity="0.6"/>
<text x="111.6" y="30.4" textLength="163.8" lengthAdjust="spacingAndGlyphs" font-size="11.3" fill="#f0f0f0" font-weight="normal" stroke="#f0f0f0" stroke-width="0.25">UEFI BIOS Utility - Q-Dashboard</text>
</g>
<g id="labels">
<text x="123.8" y="93.5" textLength="32.2" lengthAdjust="spacingAndGlyphs" font-size="10.0" fill="#eeeeee" font-weight="normal" stroke="#eeeeee" stroke-width="0.36">U10G_4</text>
<text x="118.9" y="109.3" textLength="37.1" lengthAdjust="spacingAndGlyphs" font-size="10.0" fill="#eeeeee" font-weight="normal" stroke="#eeeeee" stroke-width="0.36">U10G_20</text>
<text x="118.9" y="124.9" textLength="36.4" lengthAdjust="spacingAndGlyphs" font-size="10.0" fill="#eeeeee" font-weight="normal" stroke="#eeeeee" stroke-width="0.36">U10G_21</text>
<text x="100.2" y="140.6" textLength="42.0" lengthAdjust="spacingAndGlyphs" font-size="10.0" fill="#eeeeee" font-weight="normal" stroke="#eeeeee" stroke-width="0.36">U40G_EC1</text>
<text x="123.8" y="161.4" textLength="32.2" lengthAdjust="spacingAndGlyphs" font-size="10.0" fill="#eeeeee" font-weight="normal" stroke="#eeeeee" stroke-width="0.36">U10G_9</text>
<text x="118.9" y="177.1" textLength="37.1" lengthAdjust="spacingAndGlyphs" font-size="10.0" fill="#eeeeee" font-weight="normal" stroke="#eeeeee" stroke-width="0.36">U10G_22</text>
<text x="118.9" y="192.8" textLength="36.4" lengthAdjust="spacingAndGlyphs" font-size="10.0" fill="#eeeeee" font-weight="normal" stroke="#eeeeee" stroke-width="0.36">U10G_23</text>
<text x="100.2" y="208.4" textLength="42.0" lengthAdjust="spacingAndGlyphs" font-size="10.0" fill="#eeeeee" font-weight="normal" stroke="#eeeeee" stroke-width="0.36">U40G_EC2</text>
<text x="123.8" y="226.4" textLength="32.2" lengthAdjust="spacingAndGlyphs" font-size="10.0" fill="#eeeeee" font-weight="normal" stroke="#eeeeee" stroke-width="0.36">U10G_8</text>
<text x="113.1" y="242.1" textLength="42.9" lengthAdjust="spacingAndGlyphs" font-size="10.0" fill="#eeeeee" font-weight="normal" stroke="#eeeeee" stroke-width="0.36">U20G_C18</text>
<text x="125.1" y="257.8" textLength="30.9" lengthAdjust="spacingAndGlyphs" font-size="10.0" fill="#eeeeee" font-weight="normal" stroke="#eeeeee" stroke-width="0.36">USB_28</text>
<text x="112.6" y="318.0" textLength="42.8" lengthAdjust="spacingAndGlyphs" font-size="10.0" fill="#eeeeee" font-weight="normal" stroke="#eeeeee" stroke-width="0.36">CHA_FAN1</text>
<text x="112.6" y="333.6" textLength="43.2" lengthAdjust="spacingAndGlyphs" font-size="10.0" fill="#eeeeee" font-weight="normal" stroke="#eeeeee" stroke-width="0.36">CHA_FAN2</text>
<text x="96.0" y="364.7" textLength="59.7" lengthAdjust="spacingAndGlyphs" font-size="10.0" fill="#eeeeee" font-weight="normal" stroke="#eeeeee" stroke-width="0.36">PCIEX16(G5)_1</text>
<text x="96.2" y="380.3" textLength="59.8" lengthAdjust="spacingAndGlyphs" font-size="10.0" fill="#eeeeee" font-weight="normal" stroke="#eeeeee" stroke-width="0.36">PCIEX16(G5)_2</text>
<text x="131.6" y="395.8" textLength="24.4" lengthAdjust="spacingAndGlyphs" font-size="10.0" fill="#eeeeee" font-weight="normal" stroke="#eeeeee" stroke-width="0.36">M.2_3</text>
<text x="104.9" y="411.4" textLength="51.2" lengthAdjust="spacingAndGlyphs" font-size="10.0" fill="#eeeeee" font-weight="normal" stroke="#eeeeee" stroke-width="0.36">PCIEX16(G4)</text>
<text x="112.6" y="426.8" textLength="43.4" lengthAdjust="spacingAndGlyphs" font-size="10.0" fill="#eeeeee" font-weight="normal" stroke="#eeeeee" stroke-width="0.36">CHA_FAN3</text>
<text x="198.0" y="452.6" textLength="30.8" lengthAdjust="spacingAndGlyphs" font-size="10.0" fill="#eeeeee" font-weight="normal" stroke="#eeeeee" stroke-width="0.36">USB_12</text>
<text x="198.0" y="469.8" textLength="30.8" lengthAdjust="spacingAndGlyphs" font-size="10.0" fill="#eeeeee" font-weight="normal" stroke="#eeeeee" stroke-width="0.36">USB_13</text>
<text x="216.8" y="102.8" textLength="24.0" lengthAdjust="spacingAndGlyphs" font-size="10.0" fill="#eeeeee" font-weight="normal" stroke="#eeeeee" stroke-width="0.36">HDMI</text>
<text x="295.7" y="102.8" textLength="20.6" lengthAdjust="spacingAndGlyphs" font-size="10.0" fill="#eeeeee" font-weight="normal" stroke="#eeeeee" stroke-width="0.36">DPIN</text>
<text x="398.9" y="102.8" textLength="16.8" lengthAdjust="spacingAndGlyphs" font-size="10.0" fill="#eeeeee" font-weight="normal" stroke="#eeeeee" stroke-width="0.36">CPU</text>
<text x="599.0" y="120.0" textLength="37.6" lengthAdjust="spacingAndGlyphs" font-size="10.0" fill="#eeeeee" font-weight="normal" stroke="#eeeeee" stroke-width="0.36">CPU_FAN</text>
<text x="599.0" y="135.5" textLength="37.8" lengthAdjust="spacingAndGlyphs" font-size="10.0" fill="#eeeeee" font-weight="normal" stroke="#eeeeee" stroke-width="0.36">CPU_OPT</text>
<text x="599.0" y="150.8" textLength="44.8" lengthAdjust="spacingAndGlyphs" font-size="10.0" fill="#eeeeee" font-weight="normal" stroke="#eeeeee" stroke-width="0.36">AIO_PUMP</text>
<text x="599.0" y="177.2" textLength="34.9" lengthAdjust="spacingAndGlyphs" font-size="10.0" fill="#eeeeee" font-weight="normal" stroke="#eeeeee" stroke-width="0.36">Memory</text>
<text x="599.0" y="250.3" textLength="37.8" lengthAdjust="spacingAndGlyphs" font-size="10.0" fill="#eeeeee" font-weight="normal" stroke="#eeeeee" stroke-width="0.36">U20G_C6</text>
<text x="599.0" y="271.5" textLength="43.7" lengthAdjust="spacingAndGlyphs" font-size="10.0" fill="#eeeeee" font-weight="normal" stroke="#eeeeee" stroke-width="0.36">CHA_FAN4</text>
<text x="599.0" y="292.0" textLength="32.0" lengthAdjust="spacingAndGlyphs" font-size="10.0" fill="#eeeeee" font-weight="normal" stroke="#eeeeee" stroke-width="0.36">U5G_10</text>
<text x="599.0" y="307.5" textLength="31.5" lengthAdjust="spacingAndGlyphs" font-size="10.0" fill="#eeeeee" font-weight="normal" stroke="#eeeeee" stroke-width="0.36">U5G_11</text>
<text x="599.0" y="331.1" textLength="39.4" lengthAdjust="spacingAndGlyphs" font-size="10.0" fill="#eeeeee" font-weight="normal" stroke="#eeeeee" stroke-width="0.36">SATA6G_1</text>
<text x="599.0" y="346.4" textLength="39.7" lengthAdjust="spacingAndGlyphs" font-size="10.0" fill="#eeeeee" font-weight="normal" stroke="#eeeeee" stroke-width="0.36">SATA6G_2</text>
<text x="599.0" y="364.8" textLength="24.8" lengthAdjust="spacingAndGlyphs" font-size="10.0" fill="#eeeeee" font-weight="normal" stroke="#eeeeee" stroke-width="0.36">M.2_2</text>
<text x="599.0" y="380.3" textLength="24.8" lengthAdjust="spacingAndGlyphs" font-size="10.0" fill="#eeeeee" font-weight="normal" stroke="#eeeeee" stroke-width="0.36">M.2_4</text>
<text x="599.0" y="398.7" textLength="43.5" lengthAdjust="spacingAndGlyphs" font-size="10.0" fill="#eeeeee" font-weight="normal" stroke="#eeeeee" stroke-width="0.36">CHA_FAN5</text>
<text x="599.0" y="416.9" textLength="39.7" lengthAdjust="spacingAndGlyphs" font-size="10.0" fill="#eeeeee" font-weight="normal" stroke="#eeeeee" stroke-width="0.36">SATA6G_3</text>
<text x="599.0" y="432.4" textLength="39.7" lengthAdjust="spacingAndGlyphs" font-size="10.0" fill="#eeeeee" font-weight="normal" stroke="#eeeeee" stroke-width="0.36">SATA6G_4</text>
<text x="510.7" y="443.0" textLength="30.4" lengthAdjust="spacingAndGlyphs" font-size="10.0" fill="#eeeeee" font-weight="normal" stroke="#eeeeee" stroke-width="0.36">USB_17</text>
<text x="510.7" y="458.6" textLength="30.4" lengthAdjust="spacingAndGlyphs" font-size="10.0" fill="#eeeeee" font-weight="normal" stroke="#eeeeee" stroke-width="0.36">USB_16</text>
<text x="510.7" y="474.2" textLength="30.4" lengthAdjust="spacingAndGlyphs" font-size="10.0" fill="#eeeeee" font-weight="normal" stroke="#eeeeee" stroke-width="0.36">USB_15</text>
<text x="510.7" y="489.8" textLength="30.4" lengthAdjust="spacingAndGlyphs" font-size="10.0" fill="#eeeeee" font-weight="normal" stroke="#eeeeee" stroke-width="0.36">USB_14</text>
<text x="146.29" y="142.20" font-size="12.29" fill="#ededed" stroke="#ededed" stroke-width="0.2">*</text>
<text x="150.89" y="142.20" font-size="12.29" fill="#ededed" stroke="#ededed" stroke-width="0.2">*</text>
<text x="145.89" y="210.00" font-size="12.29" fill="#ededed" stroke="#ededed" stroke-width="0.2">*</text>
<text x="150.49" y="210.00" font-size="12.29" fill="#ededed" stroke="#ededed" stroke-width="0.2">*</text>
<text x="243.96" y="104.80" font-size="13.71" fill="#ededed" stroke="#ededed" stroke-width="0.2">*</text>
<text x="251.46" y="104.60" font-size="13.43" fill="#ededed" stroke="#ededed" stroke-width="0.2">*</text>
<text x="256.46" y="104.60" font-size="13.43" fill="#ededed" stroke="#ededed" stroke-width="0.2">*</text>
<text x="319.36" y="104.80" font-size="13.71" fill="#ededed" stroke="#ededed" stroke-width="0.2">*</text>
<text x="326.86" y="104.60" font-size="13.43" fill="#ededed" stroke="#ededed" stroke-width="0.2">*</text>
<text x="331.86" y="104.60" font-size="13.43" fill="#ededed" stroke="#ededed" stroke-width="0.2">*</text>
<text x="419.26" y="104.70" font-size="13.57" fill="#ededed" stroke="#ededed" stroke-width="0.2">*</text>
<text x="424.31" y="104.70" font-size="13.57" fill="#ededed" stroke="#ededed" stroke-width="0.2">*</text>
<text x="637.59" y="178.60" font-size="12.57" fill="#ededed" stroke="#ededed" stroke-width="0.2">*</text>
<text x="642.29" y="178.60" font-size="12.57" fill="#ededed" stroke="#ededed" stroke-width="0.2">*</text>
<rect x="85.7" y="340.0" width="71.4" height="14.3" rx="5.6" fill="#4fc0f5" stroke="#24140e" stroke-width="1.1" />
<text x="131.6" y="349.0" textLength="23.9" lengthAdjust="spacingAndGlyphs" font-size="10.0" fill="#141a1e" font-weight="normal" stroke="#141a1e" stroke-width="0.5">M.2_1</text>
<circle cx="159.3" cy="122.9" r="2.8" fill="#14ee14"/>
<circle cx="159.3" cy="190.9" r="2.8" fill="#14ee14"/>
<circle cx="159.3" cy="206.3" r="2.8" fill="#14ee14"/>
<circle cx="159.2" cy="347.0" r="2.8" fill="#14ee14"/>
<circle cx="232.2" cy="467.3" r="2.8" fill="#14ee14"/>
<circle cx="414.2" cy="109.8" r="2.8" fill="#14ee14"/>
<circle cx="596.0" cy="117.6" r="2.8" fill="#14ee14"/>
<circle cx="596.0" cy="133.0" r="2.8" fill="#14ee14"/>
<circle cx="596.0" cy="174.8" r="2.8" fill="#14ee14"/>
<circle cx="596.0" cy="328.8" r="2.8" fill="#14ee14"/>
</g>
<g id="panel">
<rect x="969.0" y="50.6" width="15.2" height="17.8" rx="2.6" fill="none" stroke="#969696" stroke-width="1.1" />
<text x="973.8" y="62.0" textLength="5.4" lengthAdjust="spacingAndGlyphs" font-size="8.6" fill="#f0f0f0" font-weight="normal" stroke="#f0f0f0" stroke-width="0.3">X</text>
<text x="750.7" y="92.2" textLength="25.2" lengthAdjust="spacingAndGlyphs" font-size="10" fill="#f0f0f0" font-weight="normal" stroke="#f0f0f0" stroke-width="0.2">M.2_1</text>
<text x="750.5" y="113.2" textLength="32.5" lengthAdjust="spacingAndGlyphs" font-size="10.3" fill="#b0b0b0" font-weight="normal" stroke="#b0b0b0" stroke-width="0.2">Device:</text>
<text x="786.4" y="113.2" textLength="159.6" lengthAdjust="spacingAndGlyphs" font-size="10.2" fill="#f4f4f4" font-weight="normal" stroke="#f4f4f4" stroke-width="0.3">ZHITAI TiPlus5000 512GB 512.1GB</text>
<rect x="934.9" y="428.5" width="49.7" height="12.7" rx="4.3" fill="#272727" stroke="#909090" stroke-width="1.25" />
<text x="952.3" y="437.6" textLength="14.7" lengthAdjust="spacingAndGlyphs" font-size="9.4" fill="#3fb0ea" font-weight="normal" stroke="#3fb0ea" stroke-width="0.28">ALL</text>
<rect x="934.9" y="444.1" width="49.7" height="12.7" rx="4.3" fill="#272727" stroke="#909090" stroke-width="1.25" />
<text x="951.3" y="453.2" textLength="16.8" lengthAdjust="spacingAndGlyphs" font-size="9.4" fill="#f0f0f0" font-weight="normal" stroke="#f0f0f0" stroke-width="0.28">USB</text>
<rect x="934.9" y="459.6" width="49.7" height="12.7" rx="4.3" fill="#272727" stroke="#909090" stroke-width="1.25" />
<text x="949.4" y="468.7" textLength="19.9" lengthAdjust="spacingAndGlyphs" font-size="9.4" fill="#f0f0f0" font-weight="normal" stroke="#f0f0f0" stroke-width="0.28">SATA</text>
<rect x="934.9" y="475.1" width="49.7" height="12.7" rx="4.3" fill="#272727" stroke="#909090" stroke-width="1.25" />
<text x="951.9" y="484.2" textLength="15.6" lengthAdjust="spacingAndGlyphs" font-size="9.4" fill="#f0f0f0" font-weight="normal" stroke="#f0f0f0" stroke-width="0.28">M.2</text>
<rect x="934.9" y="490.7" width="49.7" height="12.7" rx="4.3" fill="#272727" stroke="#909090" stroke-width="1.25" />
<text x="950.3" y="499.8" textLength="18.2" lengthAdjust="spacingAndGlyphs" font-size="9.4" fill="#f0f0f0" font-weight="normal" stroke="#f0f0f0" stroke-width="0.28">PCIE</text>
<rect x="934.9" y="506.2" width="49.7" height="12.7" rx="4.3" fill="#272727" stroke="#909090" stroke-width="1.25" />
<text x="951.3" y="515.4" textLength="16.2" lengthAdjust="spacingAndGlyphs" font-size="9.4" fill="#f0f0f0" font-weight="normal" stroke="#f0f0f0" stroke-width="0.28">FAN</text>
</g>
<g id="footer">
<polyline points="15.5,527.5 984.6,527.5" fill="none" stroke="#b4b4b4" stroke-width="1.1" />
<text x="268.8" y="538.2" textLength="28.0" lengthAdjust="spacingAndGlyphs" font-size="8.3" fill="#ececec" font-weight="normal" stroke="#ececec" stroke-width="0.25">&lt;Enter&gt;</text>
<text x="296.8" y="538.2" textLength="28.7" lengthAdjust="spacingAndGlyphs" font-size="8.3" fill="#929292" font-weight="normal" >: Option</text>
<text x="329.6" y="538.2" textLength="1.6" lengthAdjust="spacingAndGlyphs" font-size="8.3" fill="#929292" font-weight="normal" >|</text>
<text x="335.0" y="538.2" textLength="30.5" lengthAdjust="spacingAndGlyphs" font-size="8.3" fill="#ececec" font-weight="normal" stroke="#ececec" stroke-width="0.25">&lt;Insert&gt;</text>
<text x="365.5" y="538.2" textLength="54.0" lengthAdjust="spacingAndGlyphs" font-size="8.3" fill="#929292" font-weight="normal" >: Switch groups</text>
<text x="423.6" y="538.2" textLength="1.6" lengthAdjust="spacingAndGlyphs" font-size="8.3" fill="#929292" font-weight="normal" >|</text>
<text x="429.3" y="538.2" textLength="22.7" lengthAdjust="spacingAndGlyphs" font-size="8.3" fill="#ececec" font-weight="normal" stroke="#ececec" stroke-width="0.25">&lt;ESC&gt;</text>
<text x="452.0" y="538.2" textLength="53.5" lengthAdjust="spacingAndGlyphs" font-size="8.3" fill="#929292" font-weight="normal" >: Back to Setup</text>
<text x="509.8" y="538.2" textLength="1.6" lengthAdjust="spacingAndGlyphs" font-size="8.3" fill="#929292" font-weight="normal" >|</text>
<text x="514.90" y="540.20" font-size="12.00" fill="#ececec" stroke="#ececec" stroke-width="0.2">*</text>
<text x="520.0" y="538.2" textLength="88.8" lengthAdjust="spacingAndGlyphs" font-size="8.3" fill="#929292" font-weight="normal" >: Detection not available</text>
<text x="613.0" y="538.2" textLength="1.6" lengthAdjust="spacingAndGlyphs" font-size="8.3" fill="#929292" font-weight="normal" >|</text>
<text x="618.60" y="540.20" font-size="12.00" fill="#ececec" stroke="#ececec" stroke-width="0.2">*</text>
<text x="624.00" y="540.20" font-size="12.00" fill="#ececec" stroke="#ececec" stroke-width="0.2">*</text>
<text x="629.5" y="538.2" textLength="101.8" lengthAdjust="spacingAndGlyphs" font-size="8.3" fill="#929292" font-weight="normal" >: Setup options not available</text>
<text x="420.5" y="554.3" textLength="159.0" lengthAdjust="spacingAndGlyphs" font-size="8.3" fill="#f0f0f0" font-weight="normal" stroke="#f0f0f0" stroke-width="0.2">Copyright (C) 2024, ASUSTeK Computer Inc.</text>
</g>
</svg></body></html>
